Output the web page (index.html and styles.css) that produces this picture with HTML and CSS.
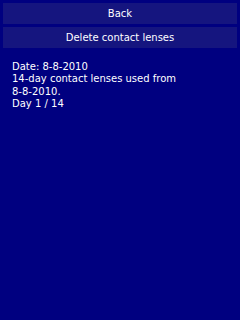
FILE: index.html
```html
<!DOCTYPE html>
<html lang="en">
<head>
    <meta charset="UTF-8">
    <title>Contact lenses</title>
    <link rel="stylesheet" href="styles.css">
</head>
<body>
<div class="menu">
    <div class="btn">Back</div>
    <div class="btn">Delete contact lenses</div>
</div>
<div class="info">
    Date: 8-8-2010<br>
    14-day contact lenses used from <span class="nobr">8-8-2010.</span><br>
    Day 1 / 14
</div>
</body>
</html>
```
FILE: styles.css
```css
html, body {
    margin: 0;
    padding: 0;
    height: 100%;
}

body {
    background: #000080;
    color: #fff;
    font-family: "DejaVu Sans", sans-serif;
    font-size: 10px;
}

.menu {
    display: flex;
    flex-direction: column;
    gap: 3px;
    padding: 3px;
}

.btn {
    background: #15157f;
    height: 21px;
    line-height: 21px;
    text-align: center;
}

.info {
    padding: 10px 12px;
    line-height: 12.4px;
    width: 190px;
}

.nobr {
    white-space: nowrap;
}
```
